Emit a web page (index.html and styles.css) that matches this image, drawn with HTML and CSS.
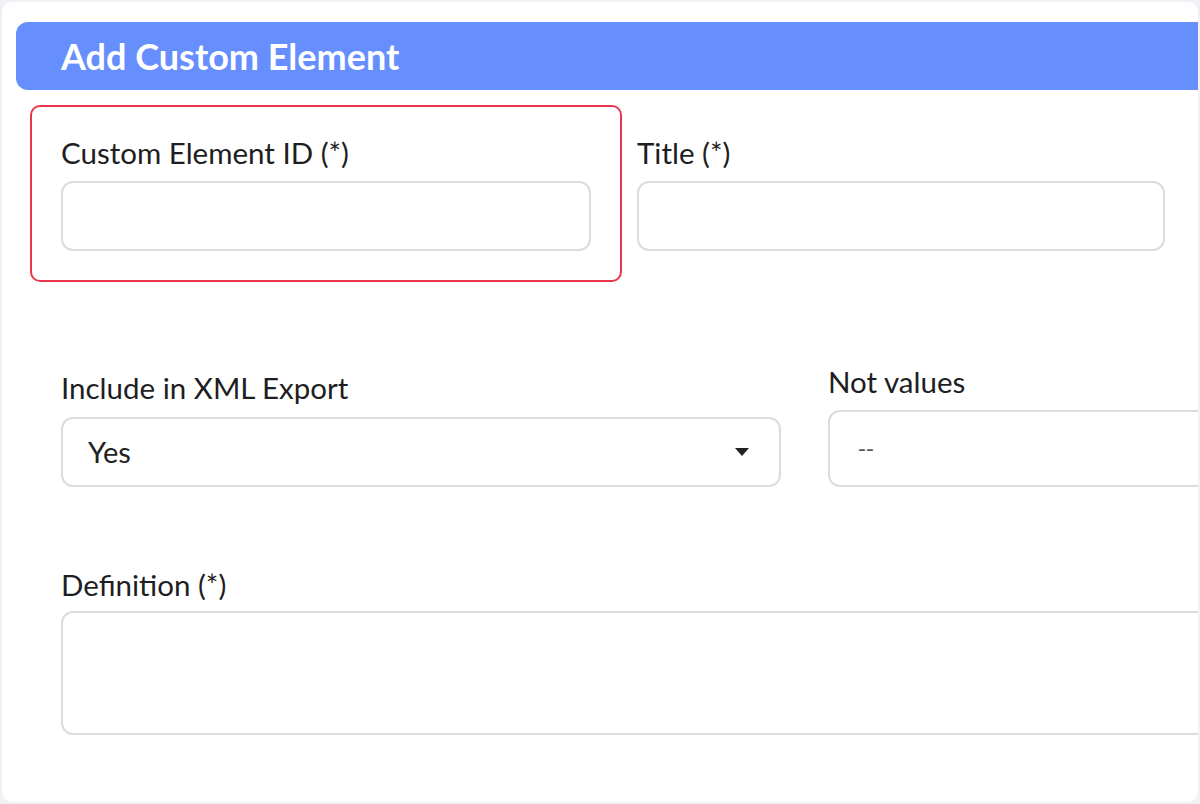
FILE: index.html
```html
<!DOCTYPE html>
<html lang="en">
<head>
    <meta charset="UTF-8">
    <meta name="viewport" content="width=device-width, initial-scale=1.0">
    <title>Add Custom Element</title>
    <link rel="stylesheet" href="styles.css">
</head>
<body>
    <div class="card">
        <div class="card-header">Add Custom Element</div>
        <form class="form">
            <div class="row row-top">
                <div class="field field-id highlight">
                    <label for="elementId">Custom Element ID (*)</label>
                    <input type="text" id="elementId">
                </div>
                <div class="field field-title">
                    <label for="elementTitle">Title (*)</label>
                    <input type="text" id="elementTitle">
                </div>
            </div>
            <div class="row row-middle">
                <div class="field field-export">
                    <label>Include in XML Export</label>
                    <div class="select">
                        <span>Yes</span>
                        <svg class="caret" width="14" height="8" viewBox="0 0 14 8"><path d="M0 0h14L7 8z" fill="#222"/></svg>
                    </div>
                </div>
                <div class="field field-notvalues">
                    <label for="notValues">Not values</label>
                    <input type="text" id="notValues" class="tall" value="--">
                </div>
            </div>
            <div class="row">
                <div class="field field-definition">
                    <label for="definition">Definition (*)</label>
                    <textarea id="definition"></textarea>
                </div>
            </div>
        </form>
    </div>
</body>
</html>
```

FILE: styles.css
```css
/* General Styles */
* {
    box-sizing: border-box;
}

body {
    margin: 0;
    background: #f0f0f5;
    font-family: Lato, "Open Sans", sans-serif;
    color: #1e1e22;
}

/* Card */
.card {
    margin: 2px;
    height: 800px;
    background: #fff;
    border-radius: 10px;
    overflow: hidden;
    padding: 20px 0 0 14px;
}

.card-header {
    width: 1240px;
    height: 68px;
    background: #668efd;
    border-radius: 12px;
    padding-left: 45px;
    display: flex;
    align-items: center;
    color: #fff;
    font-size: 36px;
    font-weight: 700;
}

/* Form */
.form {
    width: 1700px;
    padding-left: 45px;
}

.row {
    display: flex;
    align-items: flex-end;
}

.row-top {
    margin-top: 45px;
    gap: 46px;
}

.row-middle {
    margin-top: 113px;
    gap: 47px;
}

.row-middle + .row {
    margin-top: 80px;
}

.field {
    display: flex;
    flex-direction: column;
    flex-shrink: 0;
}

.field label {
    font-size: 29.5px;
    line-height: 1.2;
    margin-bottom: 11px;
}

.field-id { width: 530px; }
.field-title { width: 528px; }
.field-export { width: 720px; }
.field-notvalues { width: 720px; }
.field-definition { width: 1300px; }

.field-notvalues label {
    margin-bottom: 10px;
}

.field-definition label {
    margin-bottom: 9px;
}

input[type="text"], textarea, .select {
    height: 70px;
    border: 2px solid #dcdcdc;
    border-radius: 12px;
    background: #fff;
    font-family: inherit;
    font-size: 29px;
    color: #222;
    outline: none;
}

input[type="text"] {
    padding: 0 28px;
}

input.tall {
    height: 77px;
    font-family: "DejaVu Sans", sans-serif;
    font-size: 22px;
    color: #555;
}

textarea {
    height: 124px;
    resize: none;
}

.select {
    display: flex;
    align-items: center;
    justify-content: space-between;
    padding: 0 30px 0 25px;
}

/* Highlight annotation around the first field */
.highlight {
    position: relative;
}

.highlight::after {
    content: "";
    position: absolute;
    top: -30px;
    left: -31px;
    right: -31px;
    bottom: -31px;
    border: 2px solid #e8374a;
    border-radius: 10px;
    pointer-events: none;
}
```
